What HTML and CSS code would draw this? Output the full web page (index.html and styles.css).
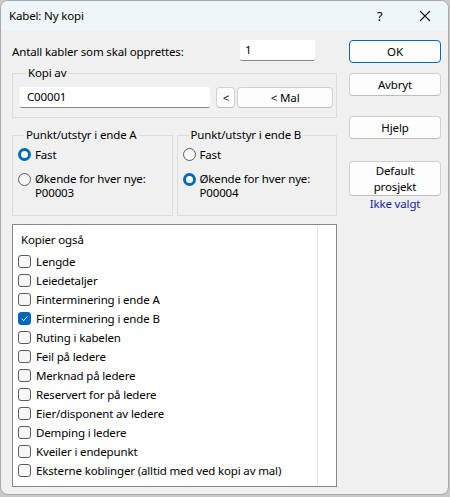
FILE: index.html
```html
<!DOCTYPE html>
<html>
<head>
<meta charset="utf-8">
<link rel="stylesheet" href="styles.css">
</head>
<body>
<div class="window">
  <div class="titlebar">
    <span class="title">Kabel: Ny kopi</span>
    <span class="tb-help">?</span>
    <span class="tb-close">
      <svg width="12" height="12" viewBox="0 0 12 12"><path d="M1 1 L11 11 M11 1 L1 11" stroke="#1a1a1a" stroke-width="1.1" fill="none"/></svg>
    </span>
  </div>
  <div class="content">
    <div class="left">
      <div class="row1">
        <span class="row1-label">Antall kabler som skal opprettes:</span>
        <div class="input count">1</div>
      </div>
      <fieldset class="group kopi">
        <legend>Kopi av</legend>
        <div class="kopi-row">
          <div class="input code">C00001</div>
          <div class="btn small">&lt;</div>
          <div class="btn mal">&lt; Mal</div>
        </div>
      </fieldset>
      <div class="groups">
        <fieldset class="group punkt a">
          <legend>Punkt/utstyr i ende A</legend>
          <div class="radio first"><span class="rb on"></span><span>Fast</span></div>
          <div class="radio second"><span class="rb"></span><span class="two">Økende for hver nye:<br>P00003</span></div>
        </fieldset>
        <fieldset class="group punkt b">
          <legend>Punkt/utstyr i ende B</legend>
          <div class="radio first"><span class="rb"></span><span>Fast</span></div>
          <div class="radio second"><span class="rb on"></span><span class="two">Økende for hver nye:<br>P00004</span></div>
        </fieldset>
      </div>
      <div class="list">
        <div class="list-col">
          <div class="list-head">Kopier også</div>
          <div class="item"><span class="cb"></span>Lengde</div>
          <div class="item"><span class="cb"></span>Leiedetaljer</div>
          <div class="item"><span class="cb"></span>Finterminering i ende A</div>
          <div class="item"><span class="cb on"><svg width="13" height="13" viewBox="0 0 13 13"><path d="M3.6 6.8 L5.6 8.7 L9.4 4.4" stroke="#fff" stroke-width="1" fill="none"/></svg></span>Finterminering i ende B</div>
          <div class="item"><span class="cb"></span>Ruting i kabelen</div>
          <div class="item"><span class="cb"></span>Feil på ledere</div>
          <div class="item"><span class="cb"></span>Merknad på ledere</div>
          <div class="item"><span class="cb"></span>Reservert for på ledere</div>
          <div class="item"><span class="cb"></span>Eier/disponent av ledere</div>
          <div class="item"><span class="cb"></span>Demping i ledere</div>
          <div class="item"><span class="cb"></span>Kveiler i endepunkt</div>
          <div class="item"><span class="cb"></span>Eksterne koblinger (alltid med ved kopi av mal)</div>
        </div>
        <div class="list-side"></div>
      </div>
    </div>
    <div class="right">
      <div class="btn side ok">OK</div>
      <div class="btn side avbryt">Avbryt</div>
      <div class="btn side hjelp">Hjelp</div>
      <div class="btn side default">Default<br>prosjekt</div>
      <div class="link">Ikke valgt</div>
    </div>
  </div>
</div>
</body>
</html>
```

FILE: styles.css
```css
html, body {
  margin: 0;
  padding: 0;
}
body {
  background: #c9c9c9;
  font-family: "Noto Sans", "Liberation Sans", sans-serif;
  font-size: 11.5px;
  letter-spacing: -0.15px;
  color: #000;
  width: 450px;
  height: 497px;
  overflow: hidden;
}
.window {
  box-sizing: border-box;
  width: 449px;
  height: 495px;
  border: 1px solid #a9a9a9;
  border-radius: 8px;
  background: #f0f0f0;
  overflow: hidden;
}
.titlebar {
  height: 30px;
  background: #eef6f9;
  display: flex;
  align-items: center;
  padding-left: 8px;
  line-height: 16px;
}
.title {
  flex: 1;
}
.tb-help {
  width: 14px;
  font-size: 13px;
  margin-right: 28px;
}
.tb-close {
  width: 12px;
  height: 12px;
  margin-right: 17px;
  display: flex;
}
.content {
  display: flex;
  padding: 9px 0 0 11px;
}
.left {
  width: 325px;
}
.right {
  width: 92px;
  margin-left: 12px;
  display: flex;
  flex-direction: column;
}
.row1 {
  display: flex;
  height: 21px;
  align-items: center;
}
.row1-label {
  width: 228px;
  padding-top: 1px;
}
.input {
  box-sizing: border-box;
  background: #fff;
  border-bottom: 1px solid #868686;
  border-radius: 2px;
  height: 21px;
  line-height: 20px;
  padding-left: 5px;
}
.count {
  width: 75px;
}
.group {
  margin: 0;
  border: 1px solid #dcdcdc;
  padding: 0;
  min-width: 0;
}
.group legend {
  padding: 0 2px;
  margin-left: 6px;
  line-height: 16px;
}
.kopi {
  margin-top: 4px;
  padding: 6px 3px 9px 7px;
}
.kopi-row {
  display: flex;
  align-items: center;
}
.code {
  width: 191px;
  padding-left: 7px;
}
.btn {
  box-sizing: border-box;
  background: #fdfdfd;
  border: 1px solid #d0d0d0;
  border-bottom-color: #bcbcbc;
  border-radius: 4px;
  text-align: center;
}
.btn.small {
  width: 19px;
  height: 21px;
  line-height: 19px;
  margin-left: 6px;
}
.btn.mal {
  width: 96px;
  height: 21px;
  line-height: 19px;
  margin-left: 2px;
}
.groups {
  display: flex;
  gap: 4px;
  margin-top: 9px;
}
.punkt {
  height: 89px;
  box-sizing: border-box;
  padding: 4px 0 0 5px;
}
.punkt.a { width: 161px; }
.punkt.b { width: 161px; }
.radio {
  display: flex;
  align-items: flex-start;
  line-height: 15px;
}
.radio .two {
  line-height: 14px;
}
.radio.second {
  margin-top: 10px;
}
.rb {
  box-sizing: border-box;
  width: 13px;
  height: 13px;
  border-radius: 50%;
  border: 1px solid #5c5c5c;
  background: #f7f7f7;
  margin: 1px 4px 0 0;
  flex: none;
}
.radio.second .rb {
  margin-top: 1px;
}
.rb.on {
  border: 3.5px solid #0067c0;
  background: #fff;
}
.list {
  box-sizing: border-box;
  margin-top: 8px;
  height: 263px;
  background: #fff;
  border: 1px solid #828790;
  display: flex;
  padding: 1px 0;
}
.list-col {
  width: 305px;
  border-right: 1px solid #e3e3e3;
  padding: 4px 0 0 5px;
  box-sizing: border-box;
}
.list-head {
  height: 19px;
  line-height: 19px;
  padding-left: 3px;
  margin-bottom: 3px;
}
.item {
  display: flex;
  align-items: center;
  height: 19px;
}
.cb {
  box-sizing: border-box;
  width: 13px;
  height: 13px;
  border: 1px solid #5c5c5c;
  border-radius: 3px;
  background: #f7f7f7;
  margin-right: 5px;
  flex: none;
  display: flex;
}
.cb.on {
  background: #0067c0;
  border-color: #0067c0;
}
.cb svg {
  margin: -1px;
}
.list-side {
  flex: 1;
}
.btn.side {
  height: 23px;
  line-height: 21px;
}
.ok {
  border: 1px solid #0067c0;
}
.avbryt { margin-top: 10px; }
.hjelp { margin-top: 20px; }
.default {
  margin-top: 22px;
  height: 35px !important;
  line-height: 16px !important;
  padding-top: 1px;
}
.link {
  color: #1c1c9e;
  text-align: center;
  line-height: 15px;
  margin-top: 0;
}
```
